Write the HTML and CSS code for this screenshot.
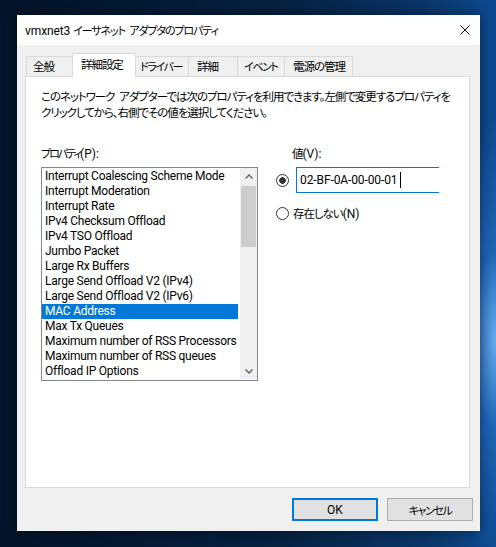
FILE: index.html
```html
<!DOCTYPE html>
<html lang="ja">
<head>
<meta charset="utf-8">
<title>vmxnet3 プロパティ</title>
<link rel="stylesheet" href="styles.css">
</head>
<body>
<div class="dialog">
  <div class="titlebar">
    <span class="title">vmxnet3 <span class="kana loose">イーサネット&ensp;アダプタのプロパティ</span></span>
    <svg class="close" width="10" height="10" viewBox="0 0 10 10"><path d="M0.5 0.5 L9.5 9.5 M9.5 0.5 L0.5 9.5" stroke="#000" stroke-width="1" fill="none"/></svg>
  </div>
  <div class="client">
    <div class="tabs">
      <div class="tab t1 ja">全般</div>
      <div class="tab t2 active ja">詳細設定</div>
      <div class="tab t3 kana">ドライバー</div>
      <div class="tab t4 ja">詳細</div>
      <div class="tab t5 kana">イベント</div>
      <div class="tab t6 ja">電源の管理</div>
    </div>
    <div class="panel">
      <p class="desc ja">このネットワーク&ensp;アダプターでは次のプロパティを利用できます。左側で変更するプロパティを<br>クリックしてから、右側でその値を選択してください。</p>
      <div class="cols">
        <div class="left">
          <div class="label"><span class="kana tight">プロパティ</span>(P):</div>
          <div class="listbox">
            <ul class="items">
              <li>Interrupt Coalescing Scheme Mode</li>
              <li>Interrupt Moderation</li>
              <li>Interrupt Rate</li>
              <li>IPv4 Checksum Offload</li>
              <li>IPv4 TSO Offload</li>
              <li>Jumbo Packet</li>
              <li>Large Rx Buffers</li>
              <li>Large Send Offload V2 (IPv4)</li>
              <li>Large Send Offload V2 (IPv6)</li>
              <li class="selected">MAC Address</li>
              <li>Max Tx Queues</li>
              <li>Maximum number of RSS Processors</li>
              <li>Maximum number of RSS queues</li>
              <li>Offload IP Options</li>
            </ul>
            <div class="scrollbar">
              <div class="sb-btn"><svg width="8" height="5" viewBox="0 0 8 5"><path d="M0.5 4.5 L4 1 L7.5 4.5" stroke="#606060" stroke-width="1.4" fill="none"/></svg></div>
              <div class="sb-thumb"></div>
              <div class="sb-track"></div>
              <div class="sb-btn"><svg width="8" height="5" viewBox="0 0 8 5"><path d="M0.5 0.5 L4 4 L7.5 0.5" stroke="#606060" stroke-width="1.4" fill="none"/></svg></div>
            </div>
          </div>
        </div>
        <div class="right">
          <div class="label vlabel"><span class="ja">値</span>(V):</div>
          <div class="radio-row first">
            <span class="radio checked"></span>
            <div class="input">02-BF-0A-00-00-01<span class="caret"></span></div>
          </div>
          <div class="radio-row second">
            <span class="radio"></span>
            <span class="rtext"><span class="ja">存在しない</span>(N)</span>
          </div>
        </div>
      </div>
    </div>
    <div class="buttons">
      <div class="btn default">OK</div>
      <div class="btn"><span class="kana">キャンセル</span></div>
    </div>
  </div>
</div>
</body>
</html>
```

FILE: styles.css
```css
* { box-sizing: border-box; }
html, body { margin: 0; padding: 0; }
body {
  width: 496px;
  height: 547px;
  overflow: hidden;
  font-family: Roboto, "Noto Sans CJK JP", sans-serif;
  font-size: 12px;
  font-feature-settings: "palt";
  color: #000;
  background:
    radial-gradient(ellipse 60px 220px at 100% 62%, rgba(120,190,255,0.85) 0%, rgba(40,120,210,0.6) 40%, rgba(20,80,160,0) 100%),
    linear-gradient(90deg, #041329 0%, #06203f 55%, #0a3567 85%, #0e4a90 100%);
  padding: 15px 0 0 17px;
}
.ja {
  font-family: "Noto Sans CJK JP", sans-serif;
  font-size: 11.5px;
  letter-spacing: -1.05px;
}
.kana {
  font-family: "Noto Sans CJK JP", sans-serif;
  font-size: 11px;
  letter-spacing: -1.4px;
}
.kana.loose { letter-spacing: -1.1px; }
.kana.tight { letter-spacing: -2px; }
.dialog {
  width: 463px;
  height: 516px;
  background: #f0f0f0;
  box-shadow: 0 0 12px rgba(0,0,0,0.45);
  display: flex;
  flex-direction: column;
}
.titlebar {
  height: 30px;
  background: #fff;
  display: flex;
  align-items: center;
  padding: 0 10px 0 8px;
}
.title { flex: 1; white-space: nowrap; letter-spacing: -0.1px; }
.close { display: block; margin-top: -1px; }
.client {
  flex: 1;
  padding: 8px 10px 0 8px;
  display: flex;
  flex-direction: column;
}
.tabs {
  height: 23px;
  display: flex;
  align-items: flex-end;
  padding-left: 1px;
}
.tab {
  height: 20px;
  line-height: 18px;
  border: 1px solid #d9d9d9;
  border-bottom: none;
  background: #f0f0f0;
  margin-left: -1px;
  padding-left: 6px;
  white-space: nowrap;
  overflow: hidden;
}
.tab:first-child { margin-left: 0; }
.tab.active {
  height: 24px;
  line-height: 21px;
  background: #fff;
  margin-bottom: -1px;
  position: relative;
  z-index: 1;
  padding-left: 8px;
}
.t1 { width: 47px; }
.t2 { width: 64px; }
.t3 { width: 54px; padding-left: 4px; }
.t4 { width: 50px; padding-left: 8px; }
.t5 { width: 48px; }
.t6 { width: 69px; padding-left: 8px; }
.panel {
  height: 412px;
  background: #fff;
  border: 1px solid #d9d9d9;
  padding: 11px 15px 0 15px;
}
.desc {
  margin: 0;
  line-height: 16px;
  white-space: nowrap;
}
.cols {
  display: flex;
  margin-top: 25px;
}
.left { width: 217px; }
.right { margin-left: 18px; }
.label { line-height: 16px; height: 16px; white-space: nowrap; }
.vlabel { padding-left: 16px; }
.listbox {
  margin-top: 6px;
  height: 214px;
  border: 1px solid #828790;
  display: flex;
  gap: 2px;
}
.items {
  list-style: none;
  margin: 0;
  padding: 1px 0 0 0;
  width: 196px;
  letter-spacing: -0.25px;
}
.items li {
  height: 15px;
  line-height: 15px;
  padding-left: 3px;
  white-space: nowrap;
  overflow: hidden;
}
.items li.selected { background: #0078d7; color: #fff; }
.scrollbar {
  width: 17px;
  background: #f0f0f0;
  display: flex;
  flex-direction: column;
}
.sb-btn {
  height: 17px;
  display: flex;
  align-items: center;
  justify-content: center;
}
.sb-thumb {
  height: 61px;
  margin: 1px 1px 0 1px;
  background: #cdcdcd;
}
.sb-track { flex: 1; }
.radio-row {
  display: flex;
  align-items: center;
}
.radio-row.first { margin-top: 6px; height: 26px; }
.radio-row.second { margin-top: 12px; height: 16px; }
.radio {
  width: 13px;
  height: 13px;
  border: 1px solid #333;
  border-radius: 50%;
  background: #fff;
  flex: none;
}
.radio.checked {
  background: radial-gradient(circle, #333 0 3px, #fff 3.6px);
}
.input {
  margin-left: 7px;
  width: 143px;
  height: 26px;
  border: 1px solid #0078d7;
  border-right: none;
  padding-left: 3px;
  display: flex;
  align-items: center;
  white-space: nowrap;
  letter-spacing: -0.1px;
}
.caret {
  display: inline-block;
  width: 1px;
  height: 16px;
  background: #000;
  margin-left: 2px;
}
.rtext { margin-left: 4px; white-space: nowrap; }
.buttons {
  margin-top: 10px;
  margin-right: -3px;
  display: flex;
  justify-content: flex-end;
  gap: 9px;
}
.btn {
  width: 86px;
  height: 23px;
  background: #e1e1e1;
  border: 1px solid #adadad;
  display: flex;
  align-items: center;
  justify-content: center;
}
.btn.default { border: 2px solid #0078d7; }
```
